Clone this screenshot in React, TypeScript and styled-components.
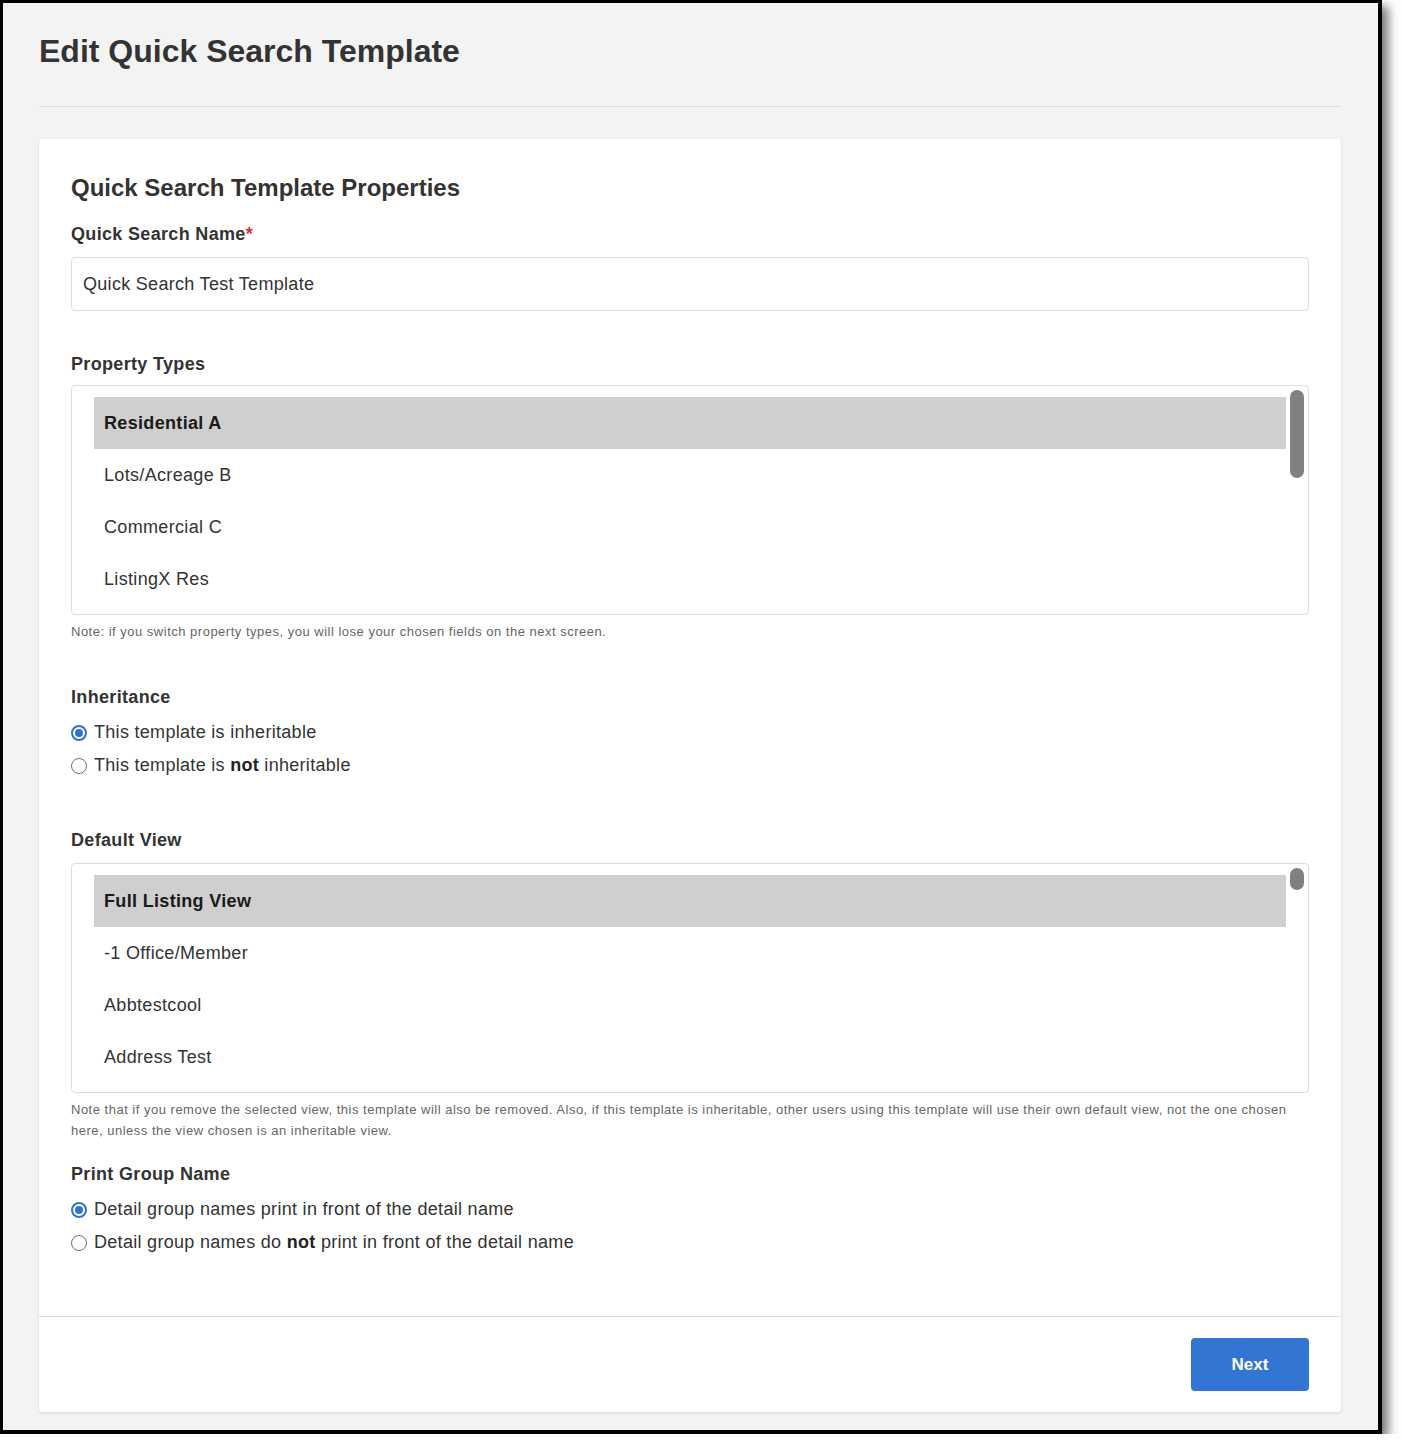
import { createGlobalStyle } from 'styled-components';
import styled from 'styled-components';

const GlobalStyle = createGlobalStyle`
  body {
    margin: 0;
    background: #ffffff;
    font-family: 'Liberation Sans', Arial, Helvetica, sans-serif;
    color: #333333;
  }
  * {
    box-sizing: border-box;
  }
`;

type Option = { label: string; selected?: boolean };

const PROPERTY_TYPES: Option[] = [
  { label: 'Residential A', selected: true },
  { label: 'Lots/Acreage B' },
  { label: 'Commercial C' },
  { label: 'ListingX Res' },
];

const VIEWS: Option[] = [
  { label: 'Full Listing View', selected: true },
  { label: '-1 Office/Member' },
  { label: 'Abbtestcool' },
  { label: 'Address Test' },
];

function OptionList({ items, thumb }: { items: Option[]; thumb: number }) {
  return (
    <ListBox>
      {items.map((item, ind) => (
        <OptionRow key={`opt-${ind}`} selected={!!item.selected}>
          {item.label}
        </OptionRow>
      ))}
      <Thumb style={{ height: thumb }} />
    </ListBox>
  );
}

function Radio({ checked, children }: { checked?: boolean; children: any }) {
  return (
    <RadioRow>
      <RadioDot checked={!!checked} />
      <span>{children}</span>
    </RadioRow>
  );
}

export default function App() {
  return (
    <>
      <GlobalStyle />
      <Frame>
        <PageTitle>Edit Quick Search Template</PageTitle>
        <Divider />
        <Card>
          <CardBody>
            <SectionTitle>Quick Search Template Properties</SectionTitle>

            <Label top={21} bottom={12}>
              Quick Search Name<Required>*</Required>
            </Label>
            <TextInput defaultValue="Quick Search Test Template" />

            <Label top={42} bottom={10}>
              Property Types
            </Label>
            <OptionList items={PROPERTY_TYPES} thumb={88} />
            <Hint>
              Note: if you switch property types, you will lose your chosen
              fields on the next screen.
            </Hint>

            <Label top={44} bottom={0}>
              Inheritance
            </Label>
            <RadioGroup>
              <Radio checked>This template is inheritable</Radio>
              <Radio>
                This template is <b>not</b> inheritable
              </Radio>
            </RadioGroup>

            <Label top={47} bottom={12}>
              Default View
            </Label>
            <OptionList items={VIEWS} thumb={22} />
            <Hint>
              Note that if you remove the selected view, this template will
              also be removed. Also, if this template is inheritable, other
              users using this template will use their own default view, not
              the one chosen here, unless the view chosen is an inheritable
              view.
            </Hint>

            <Label top={22} bottom={0}>
              Print Group Name
            </Label>
            <RadioGroup>
              <Radio checked>
                Detail group names print in front of the detail name
              </Radio>
              <Radio>
                Detail group names do <b>not</b> print in front of the detail
                name
              </Radio>
            </RadioGroup>
          </CardBody>
          <CardFooter>
            <PrimaryButton type="button">Next</PrimaryButton>
          </CardFooter>
        </Card>
      </Frame>
    </>
  );
}

const Frame = styled.div`
  width: 1382px;
  background: #f3f3f3;
  border-style: solid;
  border-color: #000000;
  border-width: 3px 4px 4px 3px;
  box-shadow: 6px 6px 10px rgba(0, 0, 0, 0.55);
  padding: 29px 37px 18px 36px;
`;

const PageTitle = styled.h1`
  margin: 0;
  font-size: 32px;
  line-height: 38px;
  font-weight: 700;
  color: #333333;
`;

const Divider = styled.div`
  height: 1px;
  background: #dddddd;
  margin: 36px 0 32px;
`;

const Card = styled.div`
  background: #ffffff;
  border-radius: 4px;
  box-shadow: 0 1px 3px rgba(0, 0, 0, 0.12);
`;

const CardBody = styled.div`
  padding: 34px 32px 57px;
`;

const SectionTitle = styled.h2`
  margin: 0;
  font-size: 24px;
  line-height: 29px;
  font-weight: 700;
  color: #333333;
`;

const Label = styled.div<{ top: number; bottom: number }>`
  margin-top: ${(p) => p.top}px;
  margin-bottom: ${(p) => p.bottom}px;
  font-size: 18px;
  line-height: 22px;
  font-weight: 700;
  letter-spacing: 0.33px;
  color: #333333;
`;

const Required = styled.span`
  color: #d9302c;
`;

const TextInput = styled.input`
  display: block;
  width: 100%;
  height: 54px;
  padding: 0 11px;
  border: 1px solid #dddddd;
  border-radius: 4px;
  font-family: inherit;
  font-size: 18px;
  letter-spacing: 0.3px;
  color: #333333;
  background: #ffffff;
  outline: none;
`;

const ListBox = styled.div`
  position: relative;
  height: 230px;
  overflow: hidden;
  border: 1px solid #dddddd;
  border-radius: 4px;
  padding: 11px 22px 9px;
`;

const OptionRow = styled.div<{ selected: boolean }>`
  display: flex;
  align-items: center;
  height: 52px;
  padding: 0 10px;
  font-size: 18px;
  letter-spacing: ${(p) => (p.selected ? '0.33px' : '0.33px')};
  background: ${(p) => (p.selected ? '#cfcfcf' : 'transparent')};
  font-weight: ${(p) => (p.selected ? 700 : 400)};
  color: ${(p) => (p.selected ? '#1a1a1a' : '#333333')};
`;

// fake scrollbar thumb, sits over the list's right edge
const Thumb = styled.div`
  position: absolute;
  top: 4px;
  right: 4px;
  width: 14px;
  border-radius: 7px;
  background: #808080;
`;

const Hint = styled.div`
  margin-top: 6px;
  font-size: 13px;
  line-height: 21px;
  letter-spacing: 0.5px;
  color: #666666;
`;

const RadioGroup = styled.div`
  margin-top: 8px;
`;

const RadioRow = styled.label`
  display: flex;
  align-items: center;
  gap: 7px;
  height: 33px;
  font-size: 18px;
  letter-spacing: 0.3px;
  color: #333333;

  b {
    font-weight: 700;
    color: #222222;
  }
`;

const RadioDot = styled.span<{ checked: boolean }>`
  position: relative;
  flex: none;
  width: 16px;
  height: 16px;
  border-radius: 50%;
  border: ${(p) => (p.checked ? '2px solid #2f73d2' : '1px solid #6f6f6f')};
  background: #ffffff;

  &::after {
    content: '';
    display: ${(p) => (p.checked ? 'block' : 'none')};
    position: absolute;
    top: 2px;
    left: 2px;
    width: 8px;
    height: 8px;
    border-radius: 50%;
    background: #2f73d2;
  }
`;

const CardFooter = styled.div`
  display: flex;
  justify-content: flex-end;
  border-top: 1px solid #dddddd;
  padding: 21px 32px;
`;

const PrimaryButton = styled.button`
  width: 118px;
  height: 53px;
  border: none;
  border-radius: 4px;
  background: #3375d3;
  color: #ffffff;
  font-family: inherit;
  font-size: 17px;
  font-weight: 700;
  cursor: pointer;
`;
